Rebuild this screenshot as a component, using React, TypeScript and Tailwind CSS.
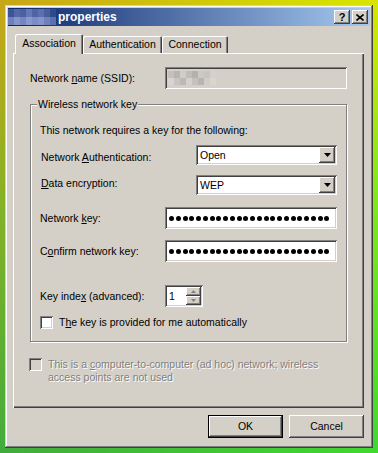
import React from "react";

const raisedBtn =
  "shadow-[inset_-1px_-1px_#404040,inset_1px_1px_#ffffff,inset_-2px_-2px_#808080,inset_2px_2px_#d4d0c8]";
const sunken =
  "shadow-[inset_1px_1px_#808080,inset_-1px_-1px_#ffffff,inset_2px_2px_#404040,inset_-2px_-2px_#d4d0c8]";

function Arrow({ w = 7, h = 4, color = "#000" }: { w?: number; h?: number; color?: string }) {
  return (
    <svg width={w} height={h} viewBox={`0 0 ${w} ${h}`}>
      <path d={`M0 0H${w}L${w / 2} ${h}Z`} fill={color} />
    </svg>
  );
}

function Select({ value }: { value: string }) {
  return (
    <div className={`w-[141px] h-[20px] bg-white p-[2px] flex items-center ${sunken}`}>
      <span className="flex-1 pl-[2px] leading-[14px]">{value}</span>
      <div className={`w-[16px] h-[16px] bg-[#d4d0c8] flex items-center justify-center ${raisedBtn}`}>
        <Arrow />
      </div>
    </div>
  );
}

function Password() {
  const dots = Array.from({ length: 24 });
  return (
    <div className={`w-[172px] h-[22px] bg-white pl-[4px] flex items-center gap-[1.75px] ${sunken}`}>
      {dots.map((_, i) => (
        <div key={i} className="w-[5px] h-[5px] rounded-full bg-black" />
      ))}
    </div>
  );
}

function Checkbox({ disabled }: { disabled?: boolean }) {
  return (
    <div
      className={`w-[13px] h-[13px] shrink-0 ${disabled ? "bg-[#d4d0c8]" : "bg-white"} ${sunken}`}
    />
  );
}

const titleBlur = [
  ["#3d5596", "#5468a8", "#4a60a2", "#6478b6", "#4e64a4", "#5c70b0", "#4a5e9e", "#2f4a8c"],
  ["#6e80bc", "#8294c8", "#7486c0", "#8898cc", "#7a8cc4", "#8494ca", "#7080bc", "#5c70b0"],
];
const ssidBlur = [
  ["#c4c0bc", "#b8b4b0", "#d0ccc8", "#c0bcb8", "#b4b0ac", "#ccc8c4", "#c8c4c0", "#d4d0cc"],
  ["#d8d4d0", "#c8c4c0", "#bcb8b4", "#d4d0cc", "#c4c0bc", "#b8b4b0", "#d0ccc8", "#d8d4d0"],
];

export default function App() {
  return (
    <div className="relative w-[378px] h-[453px] overflow-hidden pt-[5px] pl-[5px] bg-[linear-gradient(to_bottom,#c9a617,#86b226_45%,#42ac3c)] before:absolute before:inset-0 before:content-[''] before:bg-[linear-gradient(to_bottom,#d8e600,#7ee81a_45%,#40d830)] before:[mask-image:linear-gradient(to_right,transparent,black)] font-['Liberation_Sans',Arial,sans-serif] text-[10.5px] leading-[13px] text-black">
      <div className="relative z-10 w-[368px] h-[443px] bg-[#d4d0c8] p-[3px] flex flex-col shadow-[inset_-1px_-1px_#404040,inset_1px_1px_#d4d0c8,inset_-2px_-2px_#808080,inset_2px_2px_#ffffff]">
        {/* Title bar */}
        <div className="h-[18px] flex items-center pr-[2px] bg-[linear-gradient(to_right,#0a246a,#a6caf0)]">
          <div className="flex flex-col">
            {titleBlur.map((row, r) => (
              <div key={r} className="flex">
                {row.map((c, i) => (
                  <div key={i} className="w-[6px] h-[8px]" style={{ backgroundColor: c }} />
                ))}
              </div>
            ))}
          </div>
          <span className="ml-[2px] text-white font-bold text-[12px] leading-[14px]">properties</span>
          <div className="ml-auto flex gap-[2px]">
            <div className={`w-[16px] h-[14px] bg-[#d4d0c8] flex items-center justify-center font-bold text-[11px] leading-[11px] ${raisedBtn}`}>
              ?
            </div>
            <div className={`w-[16px] h-[14px] bg-[#d4d0c8] flex items-center justify-center ${raisedBtn}`}>
              <svg width="8" height="7" viewBox="0 0 8 7">
                <path d="M0.5 0.5L7.5 6.5M7.5 0.5L0.5 6.5" stroke="#000" strokeWidth="1.6" />
              </svg>
            </div>
          </div>
        </div>

        {/* Tabs */}
        <div className="mt-[8px] ml-[5px] h-[20px] flex items-end pl-[2px] relative z-10">
          <div className="w-[68px] h-[20px] bg-[#d4d0c8] rounded-t-[2px] flex items-center justify-center pb-[1px] shadow-[inset_1px_1px_#ffffff,inset_-1px_0_#404040,inset_-2px_0_#808080]">
            Association
          </div>
          <div className="w-[79px] h-[17px] mb-[1px] bg-[#d4d0c8] rounded-t-[2px] flex items-center justify-center shadow-[inset_1px_1px_#ffffff,inset_-1px_0_#404040,inset_-2px_0_#808080]">
            Authentication
          </div>
          <div className="w-[66px] h-[17px] mb-[1px] bg-[#d4d0c8] rounded-t-[2px] flex items-center justify-center shadow-[inset_1px_1px_#ffffff,inset_-1px_0_#404040,inset_-2px_0_#808080]">
            Connection
          </div>
        </div>

        {/* Panel */}
        <div className="-mt-[1px] ml-[5px] w-[351px] h-[355px] flex flex-col shadow-[inset_1px_1px_#ffffff,inset_-1px_-1px_#404040,inset_-2px_-2px_#808080]">
          {/* SSID */}
          <div className="mt-[14px] px-[17px] h-[22px] flex items-center">
            <span>
              Network <u>n</u>ame (SSID):
            </span>
            <div className={`ml-auto w-[182px] h-[22px] bg-[#d4d0c8] p-[2px] flex items-center ${sunken}`}>
              <div className="flex flex-col ml-[1px]">
                {ssidBlur.map((row, r) => (
                  <div key={r} className="flex">
                    {row.map((c, i) => (
                      <div key={i} className="w-[6px] h-[7px]" style={{ backgroundColor: c }} />
                    ))}
                  </div>
                ))}
              </div>
            </div>
          </div>

          {/* Group box */}
          <div className="relative mt-[15px] mx-[17px] h-[238px] flex flex-col border border-[#808080] shadow-[inset_1px_1px_#ffffff,1px_1px_#ffffff] pl-[9px] pr-[9px]">
            <span className="absolute -top-[7px] left-[6px] px-[1px] bg-[#d4d0c8] leading-[13px]">
              Wireless network key
            </span>
            <div className="mt-[15px] h-[20px] flex items-center">
              This network requires a key for the following:
            </div>
            <div className="mt-[5px] h-[20px] flex items-center">
              <span className="pl-[1px] pt-[4px]">
                Network <u>A</u>uthentication:
              </span>
              <div className="ml-auto">
                <Select value="Open" />
              </div>
            </div>
            <div className="mt-[10px] h-[20px] flex items-center">
              <span className="pl-[1px] pb-[4px]">
                <u>D</u>ata encryption:
              </span>
              <div className="ml-auto">
                <Select value="WEP" />
              </div>
            </div>
            <div className="mt-[12px] h-[22px] flex items-center">
              <span>
                Network <u>k</u>ey:
              </span>
              <div className="ml-auto">
                <Password />
              </div>
            </div>
            <div className="mt-[11px] h-[22px] flex items-center">
              <span>
                C<u>o</u>nfirm network key:
              </span>
              <div className="ml-auto">
                <Password />
              </div>
            </div>
            <div className="mt-[23px] h-[22px] flex items-center">
              <span className="w-[125px]">
                Key inde<u>x</u> (advanced):
              </span>
              <div className={`w-[38px] h-[22px] bg-white p-[2px] flex ${sunken}`}>
                <span className="flex-1 pl-[2px] flex items-center">1</span>
                <div className="w-[15px] flex flex-col">
                  <div className={`h-[9px] bg-[#d4d0c8] flex items-center justify-center ${raisedBtn}`}>
                    <svg width="5" height="3" viewBox="0 0 5 3">
                      <path d="M0 3H5L2.5 0Z" fill="#808080" />
                    </svg>
                  </div>
                  <div className={`h-[9px] bg-[#d4d0c8] flex items-center justify-center ${raisedBtn}`}>
                    <Arrow w={5} h={3} color="#808080" />
                  </div>
                </div>
              </div>
            </div>
            <div className="mt-[9px] flex items-center gap-[6px] pl-[-1px]">
              <Checkbox />
              <span>
                T<u>h</u>e key is provided for me automatically
              </span>
            </div>
          </div>

          {/* ad hoc */}
          <div className="mt-[16px] ml-[16px] flex items-start gap-[6px]">
            <Checkbox disabled />
            <span className="text-[#808080] [text-shadow:1px_1px_#ffffff] leading-[13px]">
              This is a <u>c</u>omputer-to-computer (ad hoc) network; wireless
              <br />
              access points are not used
            </span>
          </div>
        </div>

        {/* Buttons */}
        <div className="mt-[7px] ml-[5px] w-[351px] flex justify-end gap-[6px]">
          <div className="w-[75px] h-[23px] bg-[#d4d0c8] flex items-center justify-center shadow-[inset_0_0_0_1px_#000000,inset_-2px_-2px_#404040,inset_2px_2px_#ffffff,inset_-3px_-3px_#808080]">
            OK
          </div>
          <div className={`w-[75px] h-[23px] bg-[#d4d0c8] flex items-center justify-center ${raisedBtn}`}>
            Cancel
          </div>
        </div>
      </div>
    </div>
  );
}
